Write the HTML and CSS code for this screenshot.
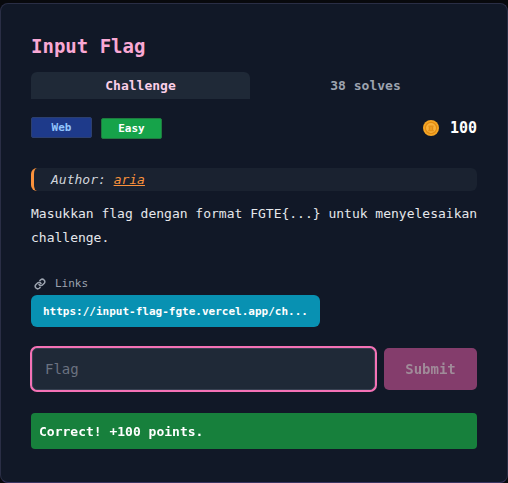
FILE: index.html
```html
<!DOCTYPE html>
<html>
<head>
<meta charset="utf-8">
<link rel="stylesheet" href="styles.css">
</head>
<body>
<div class="card">
  <h1 class="title">Input Flag</h1>
  <div class="tabs">
    <div class="tab active">Challenge</div>
    <div class="tab">38 solves</div>
  </div>
  <div class="meta">
    <span class="badge web">Web</span>
    <span class="badge easy">Easy</span>
    <span class="spacer"></span>
    <svg class="coin" width="16" height="16" viewBox="0 0 16 16">
      <circle cx="8" cy="8" r="8" fill="#f5a524"/>
      <circle cx="8" cy="8" r="5.6" fill="#f7b03a" stroke="#e08a12" stroke-width="1.2"/>
      <rect x="5.4" y="5.6" width="5.2" height="1.2" fill="#e08a12"/>
      <rect x="5.8" y="7" width="1.1" height="3" fill="#e08a12"/>
      <rect x="7.45" y="7" width="1.1" height="3" fill="#e08a12"/>
      <rect x="9.1" y="7" width="1.1" height="3" fill="#e08a12"/>
      <rect x="5.2" y="10.2" width="5.6" height="1.1" fill="#e08a12"/>
    </svg>
    <span class="points">100</span>
  </div>
  <div class="author"><em>Author: <a class="author-link" href="#">aria</a></em></div>
  <p class="desc">Masukkan flag dengan format FGTE{...} untuk menyelesaikan challenge.</p>
  <div class="links-label">
    <svg width="12" height="12" viewBox="0 0 24 24" fill="none" stroke="#9ca3af" stroke-width="3" stroke-linecap="round" stroke-linejoin="round">
      <path d="M10 13a5 5 0 0 0 7.5.5l3-3a5 5 0 0 0-7-7l-1.7 1.7"/>
      <path d="M14 11a5 5 0 0 0-7.5-.5l-3 3a5 5 0 0 0 7 7l1.7-1.7"/>
    </svg>
    <span>Links</span>
  </div>
  <a class="link-btn" href="#">https://input-flag-fgte.vercel.app/ch...</a>
  <form class="flag-row">
    <input class="flag-input" type="text" placeholder="Flag" autofocus>
    <button class="submit" type="button">Submit</button>
  </form>
  <div class="success">Correct! +100 points.</div>
</div>
</body>
</html>
```
FILE: styles.css
```css
* { box-sizing: border-box; }
html, body { margin: 0; padding: 0; }
body {
  background: #08090d;
  font-family: "DejaVu Sans Mono", "Liberation Mono", monospace;
  color: #e5e7eb;
  padding-top: 3px;
}
.card {
  width: 508px;
  height: 480px;
  background: #111827;
  border: 1px solid #2a2e45;
  border-bottom-color: #3a3562;
  border-radius: 8px;
  padding: 30px 30px 0 30px;
}
.title {
  margin: 0;
  font-size: 19px;
  line-height: 24px;
  font-weight: bold;
  color: #f9a8d4;
}
.tabs {
  margin-top: 14px;
  display: flex;
  gap: 4px;
  height: 27px;
}
.tab {
  flex: 1;
  display: flex;
  align-items: center;
  justify-content: center;
  font-size: 13px;
  font-weight: bold;
  color: #9ca3af;
  border-radius: 6px 6px 0 0;
}
.tab.active {
  background: #1f2937;
  color: #fbcfe8;
  flex: 0 0 219px;
}
.meta {
  margin-top: 18px;
  display: flex;
  align-items: center;
  height: 22px;
}
.badge {
  width: 61px;
  height: 21px;
  display: flex;
  align-items: center;
  justify-content: center;
  font-size: 11px;
  font-weight: bold;
  border-radius: 2px;
}
.web {
  background: #1e3a8a;
  color: #93c5fd;
  border: 1px solid #2c3f6f;
  margin-top: -2px;
}
.easy {
  margin-left: 9px;
  background: #16a34a;
  color: #ffffff;
  border: 1px solid #1f7a3f;
  margin-top: 1px;
}
.spacer { flex: 1; }
.coin { margin-right: 11px; margin-left: -2px; }
.points {
  font-size: 15px;
  font-weight: bold;
  color: #ffffff;
}
.author {
  margin-top: 29px;
  height: 23px;
  display: flex;
  align-items: center;
  background: #1a2230;
  border-left: 3px solid #fb923c;
  border-radius: 6px;
  padding-left: 17px;
  font-size: 13px;
  color: #d1d5db;
}
.author-link {
  color: #fb923c;
  text-decoration: underline;
}
.desc {
  margin: 11px -4px 0 0;
  font-size: 13px;
  line-height: 23.5px;
  color: #e5e7eb;
}
.links-label {
  margin-top: 27px;
  display: flex;
  align-items: center;
  gap: 9px;
  font-size: 11px;
  line-height: 16px;
  color: #9ca3af;
  padding-left: 3px;
}
.link-btn {
  margin-top: 3px;
  display: inline-flex;
  align-items: center;
  height: 32px;
  padding: 0 12px;
  background: #0891b2;
  color: #ffffff;
  font-size: 11px;
  font-weight: bold;
  text-decoration: none;
  border-radius: 6px;
}
.flag-row {
  margin: 21px 0 0 0;
  display: flex;
  gap: 8px;
  height: 42px;
}
.flag-input {
  flex: 1;
  height: 42px;
  background: #1f2937;
  border: 1px solid #374151;
  border-radius: 5px;
  box-shadow: 0 0 0 2px #f472b6;
  outline: none;
  padding: 0 12px;
  font-family: "DejaVu Sans Mono", "Liberation Mono", monospace;
  font-size: 14px;
  color: #e5e7eb;
  caret-color: #e5e7eb;
  margin: 0 1px;
}
.flag-input::placeholder { color: #6b7280; }
.submit {
  width: 93px;
  height: 42px;
  border: none;
  border-radius: 5px;
  background: #843d6c;
  color: #a08b99;
  font-family: "DejaVu Sans Mono", "Liberation Mono", monospace;
  font-size: 14px;
  font-weight: bold;
}
.success {
  margin-top: 23px;
  height: 36px;
  display: flex;
  align-items: center;
  padding-left: 8px;
  background: #17803c;
  color: #ffffff;
  font-size: 13px;
  font-weight: bold;
  border-radius: 4px;
}
```
